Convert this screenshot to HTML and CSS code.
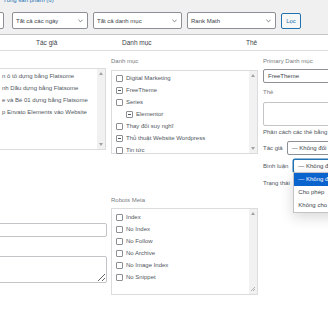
FILE: index.html
```html
<!DOCTYPE html>
<html lang="vi">
<head>
    <meta charset="UTF-8">
    <meta name="viewport" content="width=device-width, initial-scale=1.0">
    <title>Sửa hàng loạt</title>
    <link rel="stylesheet" href="styles.css">
</head>
<body>
    <div class="top">
        <div class="count">Tổng sản phẩm (6)</div>
        <div class="filters">
            <div class="select bulk"></div>
            <div class="select w-date"><span>Tất cả các ngày</span><svg class="chev" viewBox="0 0 6 4"><path d="M0.5 0.5 L3 3 L5.5 0.5"/></svg></div>
            <div class="select w-cat"><span>Tất cả danh mục</span><svg class="chev" viewBox="0 0 6 4"><path d="M0.5 0.5 L3 3 L5.5 0.5"/></svg></div>
            <div class="select w-cat"><span>Rank Math</span><svg class="chev" viewBox="0 0 6 4"><path d="M0.5 0.5 L3 3 L5.5 0.5"/></svg></div>
            <button class="btn">Lọc</button>
        </div>
    </div>

    <div class="thead">
        <span></span>
        <span>Tác giả</span>
        <span>Danh mục</span>
        <span>Thẻ</span>
    </div>

    <div class="bulk-edit">
        <!-- left: selected posts + Rank Math fields -->
        <div class="col col-left">
            <div class="listbox posts">
                <ul>
                    <li>n ô tô dựng bằng Flatsome</li>
                    <li>nh Dầu dựng bằng Flatsome</li>
                    <li>e và Bé 01 dựng bằng Flatsome</li>
                    <li>p Envato Elements vào Website</li>
                </ul>
                <div class="sbar">
                    <svg class="arr" viewBox="0 0 4 3"><path d="M0 3 L2 0 L4 3Z"/></svg>
                    <svg class="arr" viewBox="0 0 4 3"><path d="M0 0 L2 3 L4 0Z"/></svg>
                </div>
            </div>
            <input class="field" type="text">
            <textarea class="area"></textarea>
        </div>

        <!-- middle: categories + robots meta -->
        <div class="col col-mid">
            <div class="label">Danh mục</div>
            <div class="listbox cats">
                <ul>
                    <li><span class="cb"></span>Digital Marketing</li>
                    <li><span class="cb mixed"></span>FreeTheme</li>
                    <li><span class="cb"></span>Series</li>
                    <li class="sub"><span class="cb mixed"></span>Elementor</li>
                    <li><span class="cb"></span>Thay đổi suy nghĩ</li>
                    <li><span class="cb mixed"></span>Thủ thuật Website Wordpress</li>
                    <li><span class="cb"></span>Tin tức</li>
                </ul>
                <div class="sbar">
                    <svg class="arr" viewBox="0 0 4 3"><path d="M0 3 L2 0 L4 3Z"/></svg>
                    <svg class="arr" viewBox="0 0 4 3"><path d="M0 0 L2 3 L4 0Z"/></svg>
                </div>
            </div>

            <div class="label robots-label">Robots Meta</div>
            <div class="listbox robots">
                <ul>
                    <li><span class="cb"></span>Index</li>
                    <li><span class="cb"></span>No Index</li>
                    <li><span class="cb"></span>No Follow</li>
                    <li><span class="cb"></span>No Archive</li>
                    <li><span class="cb"></span>No Image Index</li>
                    <li><span class="cb"></span>No Snippet</li>
                </ul>
                <div class="sbar">
                    <svg class="arr" viewBox="0 0 4 3"><path d="M0 3 L2 0 L4 3Z"/></svg>
                    <svg class="grip" viewBox="0 0 4 4"><path d="M4 0 L0 4 M4 2 L2 4"/></svg>
                </div>
            </div>
        </div>

        <!-- right: primary category, tags, author... -->
        <div class="col col-right">
            <div class="label">Primary Danh mục</div>
            <div class="select wide">FreeTheme</div>

            <div class="label tags-label">Thẻ</div>
            <textarea class="area tags"></textarea>
            <div class="help">Phân cách các thẻ bằng dấu phẩy</div>

            <div class="row author">
                <span class="row-label">Tác giả</span>
                <div class="select wide">— Không đổi —</div>
            </div>
            <div class="row comments">
                <span class="row-label">Bình luận</span>
                <div class="dd">
                    <div class="select wide focus">— Không đổi —</div>
                    <div class="menu">
                        <div class="on">— Không đổi —</div>
                        <div>Cho phép</div>
                        <div>Không cho phép</div>
                    </div>
                </div>
            </div>
            <div class="row status">
                <span class="row-label">Trạng thái</span>
                <div class="select wide"></div>
            </div>
        </div>
    </div>
</body>
</html>
```

FILE: styles.css
```css
body {
    margin: 0;
    width: 328px;
    height: 320px;
    overflow: hidden;
    background: #fff;
    font-family: "Liberation Sans", Arial, sans-serif;
    font-size: 6px;
    color: #50575e;
}

ul {
    list-style: none;
    margin: 0;
    padding: 0;
}

/* top filter bar */
.top {
    display: flow-root;
    background: #f0f0f1;
    height: 34px;
}

.count {
    margin-top: -4px;
    padding-left: 3px;
    line-height: 8px;
    color: #2271b1;
}

.filters {
    display: flex;
    gap: 5px;
    margin-top: 8px;
}

.select {
    box-sizing: border-box;
    height: 17px;
    border: 1px solid #8c8f94;
    border-radius: 2px;
    background: #fff;
    display: flex;
    align-items: center;
    justify-content: space-between;
    padding: 0 4px 0 3px;
    color: #3c434a;
    white-space: nowrap;
}

.bulk {
    width: 20px;
    margin-left: -16px;
    margin-right: 3px;
}

.w-date {
    width: 76px;
}

.w-cat {
    width: 89px;
}

.chev {
    width: 5px;
    height: 4px;
    fill: none;
    stroke: #646970;
    stroke-width: 1;
}

.btn {
    box-sizing: border-box;
    width: 20px;
    height: 16px;
    margin-top: 1px;
    padding: 0;
    border: 1px solid #2271b1;
    border-radius: 2px;
    background: #f6f7f7;
    color: #2271b1;
    font-family: inherit;
    font-size: 6px;
}

/* table header */
.thead {
    display: grid;
    grid-template-columns: 36px 86px 124px 1fr;
    align-items: center;
    height: 15px;
    border-top: 1px solid #c3c4c7;
    border-bottom: 1px solid #dcdcde;
    font-size: 6.5px;
    color: #3c434a;
}

/* bulk edit area */
.bulk-edit {
    display: flex;
    gap: 5px;
}

.col {
    display: flex;
    flex-direction: column;
    flex: 0 0 auto;
}

.col-left {
    width: 106px;
}

.col-mid {
    width: 147px;
}

.col-right {
    width: 110px;
}

.label {
    line-height: 8px;
    margin-top: 6px;
    color: #787c82;
}

.listbox {
    display: flex;
    box-sizing: border-box;
    border: 1px solid #dcdcde;
    background: #fff;
}

.listbox ul {
    flex: 1;
    padding-top: 1px;
}

.listbox li {
    display: flex;
    align-items: center;
    gap: 3px;
    height: 12px;
    white-space: nowrap;
}

.sbar {
    width: 8px;
    background: #f1f1f1;
    display: flex;
    flex-direction: column;
    justify-content: space-between;
    align-items: center;
    padding: 3px 0;
}

.arr {
    width: 4px;
    height: 3px;
    fill: #a3a3a3;
}

.grip {
    width: 4px;
    height: 4px;
    stroke: #a3a3a3;
    stroke-width: 0.8;
}

.posts {
    margin-top: 17px;
    margin-left: -2px;
    height: 82px;
}

.posts li {
    padding-left: 3px;
}

.cats {
    margin-top: 5px;
    height: 84px;
}

.cats ul,
.robots ul {
    padding-left: 4px;
}

.cats li.sub {
    padding-left: 10px;
}

.robots-label {
    margin-top: 42px;
}

.robots {
    margin-top: 4px;
    height: 87px;
}

.robots ul {
    padding-top: 2px;
}

.cb {
    box-sizing: border-box;
    width: 7px;
    height: 7px;
    border: 1px solid #8c8f94;
    border-radius: 1px;
    background: #fff;
    display: flex;
    align-items: center;
    justify-content: center;
}

.cb.mixed::after {
    content: "";
    width: 3px;
    height: 1px;
    background: #50575e;
}

.field,
.area {
    box-sizing: border-box;
    display: block;
    margin: 0;
    border: 1px solid #c3c4c7;
    border-radius: 2px;
    background: #fff;
    font-family: inherit;
    font-size: 6px;
}

.col-left .field {
    margin-top: 73px;
    margin-left: -2px;
    width: 109px;
    height: 14px;
}

.col-left .area {
    margin-top: 19px;
    margin-left: -2px;
    width: 109px;
    height: 27px;
}

/* right column */
.wide {
    height: 14px;
    width: 100%;
    padding-left: 4px;
}

.col-right .label + .select {
    margin-top: 4px;
}

.tags-label {
    margin-top: 5px;
}

.tags {
    margin-top: 6px;
    width: 100%;
    height: 24px;
}

.help {
    margin-top: 2px;
    line-height: 8px;
    white-space: nowrap;
}

.row {
    display: flex;
    align-items: center;
    gap: 4px;
    white-space: nowrap;
}

.row .select {
    flex: 1;
}

.author {
    margin-top: 5px;
}

.comments {
    margin-top: 4px;
    gap: 5px;
}

.status {
    margin-top: 3px;
}

.dd {
    position: relative;
    flex: 1;
}

.focus {
    border-color: #2271b1;
    box-shadow: 0 0 0 0.5px #2271b1;
}

.menu {
    position: absolute;
    top: 13px;
    left: 0;
    width: 60px;
    background: #fff;
    border: 1px solid #c3c4c7;
    box-shadow: 0 4px 14px rgba(0, 0, 0, 0.16);
    color: #3c434a;
}

.menu div {
    height: 13px;
    line-height: 13px;
    padding-left: 4px;
    white-space: nowrap;
}

.menu .on {
    background: #0b63ce;
    color: #fff;
}
```
